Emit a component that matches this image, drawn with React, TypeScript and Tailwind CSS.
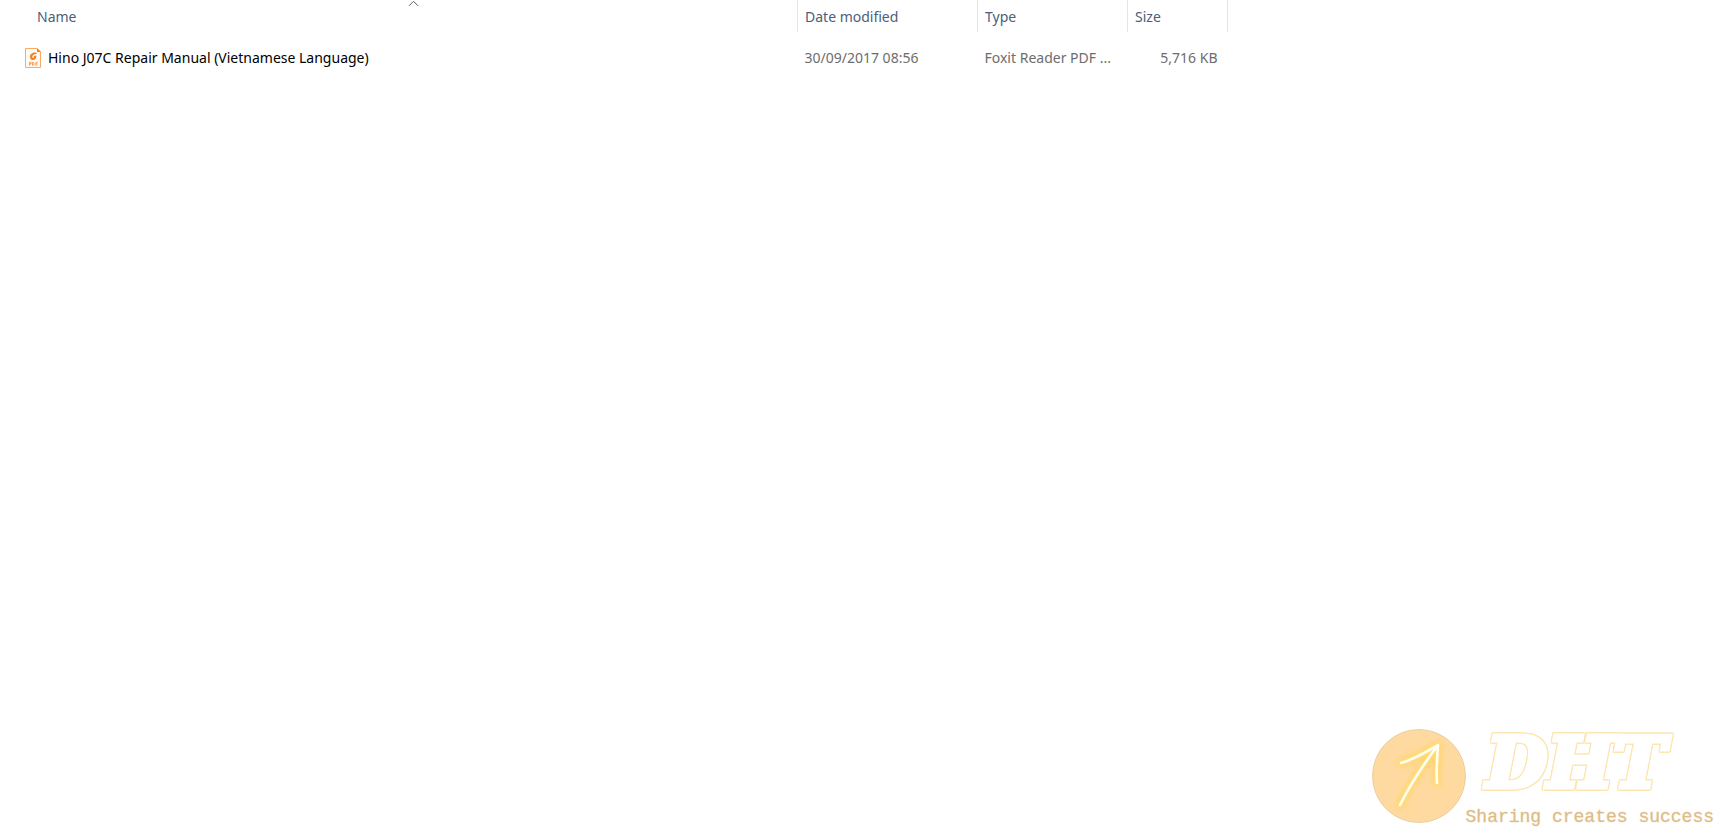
const columns = ["Date modified", "Type", "Size"]

const files = [
    {
        name: "Hino J07C Repair Manual (Vietnamese Language)",
        modified: "30/09/2017 08:56",
        type: "Foxit Reader PDF ...",
        size: "5,716 KB",
    },
]

const SortArrow = () => (
    <svg className="absolute left-[408px] top-0 h-[7px] w-[11px]" viewBox="0 0 11 7" fill="none" stroke="#5a5a5a">
        <path d="M1 5.8 5.5 1.3 10 5.8" />
    </svg>
)

const PdfIcon = () => (
    <svg className="h-5 w-4 shrink-0" viewBox="0 0 16 20" fill="none">
        <path d="M.5 .5H12L15.5 4V19.5H.5Z" fill="#fffaf4" stroke="#f9ab64" />
        <path d="M12 0 16 4H12Z" fill="#f58220" />
        <path d="M11.500 4.500C7.500 4 4.900 5.800 4.900 8.700c0 2 1.300 3.400 3.200 3.400 2.300 0 3.700-2 3.200-4.600L8.500 8c.6.5.7 1.100.3 1.600-.4.500-1.300.4-1.500-.3C7 7.500 8.500 6 11.500 6Z" fill="#f58220" />
        <path d="M4.500 17.800V14.300h1.600v1.700H4.500M7.500 14.300v3h.6c1.500 0 1.500-3 0-3ZM11 17.800v-3.500h1.700M11 16h1.500" stroke="#f79646" strokeWidth=".9" />
    </svg>
)

const ArrowLogo = () => (
    <svg className="size-[94px] shrink-0" viewBox="0 0 94 94" fill="none" strokeLinecap="round" strokeLinejoin="round">
        <defs>
            <filter id="glow" x="-40%" y="-40%" width="180%" height="180%">
                <feGaussianBlur stdDeviation="3" />
            </filter>
            <filter id="soft" x="-20%" y="-20%" width="140%" height="140%">
                <feGaussianBlur stdDeviation="1" />
            </filter>
        </defs>
        <circle cx="47" cy="47" r="46.500" fill="#ffdaa0" stroke="#e3c899" strokeWidth=".8" />
        <path d="M28 76C38 56 51 36 66 16M29 34C43 30 54 23 66 16C65 29 64 42 65 54" stroke="#ffd05a" strokeWidth="7" opacity=".8" filter="url(#glow)" />
        <path d="M28 76C38 56 51 36 66 16M29 34C43 30 54 23 66 16C65 29 64 42 65 54" stroke="#ffe27a" strokeWidth="4" filter="url(#soft)" />
        <path d="M28 76C38 56 51 36 66 16M29 34C43 30 54 23 66 16C65 29 64 42 65 54" stroke="#fffdf0" strokeWidth="2.600" />
    </svg>
)

const FileTable = () => (
    <table className="w-[1228px] table-fixed border-collapse text-left">
        <colgroup>
            <col />
            <col className="w-[180px]" />
            <col className="w-[150px]" />
            <col className="w-[100px]" />
        </colgroup>
        <thead>
            <tr className="h-8 text-[#4c607a]">
                <th className="relative border-r border-[#e5e5e5] p-0 pt-[2px] pl-[37px] font-normal">
                    <SortArrow />
                    <button type="button">Name</button>
                </th>
                {columns.map((column) => (
                    <th key={column} className="border-r border-[#e5e5e5] p-0 pt-[2px] pl-[7px] font-normal">
                        <button type="button">{column}</button>
                    </th>
                ))}
            </tr>
        </thead>
        <tbody>
            {files.map((file) => (
                <tr key={file.name} className="whitespace-nowrap text-[#6d6d6d]">
                    <td className="p-0 pt-4 pl-[25px]">
                        <div className="flex items-center gap-[7px] text-black">
                            <PdfIcon />
                            {file.name}
                        </div>
                    </td>
                    <td className="p-0 pt-4 pl-[7px]">{file.modified}</td>
                    <td className="p-0 pt-4 pl-[7px]">{file.type}</td>
                    <td className="p-0 pt-4 pr-[10px] text-right">{file.size}</td>
                </tr>
            ))}
        </tbody>
    </table>
)

const Brand = () => (
    <footer className="mt-auto flex items-start justify-end pr-[6px]">
        <ArrowLogo />
        <div className="flex flex-col">
            <p className="pb-2 pl-[21px] font-['DejaVu_Serif',serif] text-[70px] leading-[68px] font-bold text-white italic [-webkit-text-stroke:5px_white] [filter:drop-shadow(1px_0_0_#fde5ae)_drop-shadow(-1px_0_0_#fde5ae)_drop-shadow(0_1px_0_#fde5ae)_drop-shadow(0_-1px_0_#fde5ae)]">
                DHT
            </p>
            <p className="font-['Liberation_Mono',monospace] text-[18px] leading-6 text-[#dcb981] [-webkit-text-stroke:1px_#e3c49160]">
                Sharing creates success
            </p>
        </div>
    </footer>
)

export default function App() {
    return (
        <main className="flex min-h-screen flex-col bg-white font-['Noto_Sans','Open_Sans',sans-serif] text-[14px] leading-5">
            <FileTable />
            <Brand />
        </main>
    )
}
